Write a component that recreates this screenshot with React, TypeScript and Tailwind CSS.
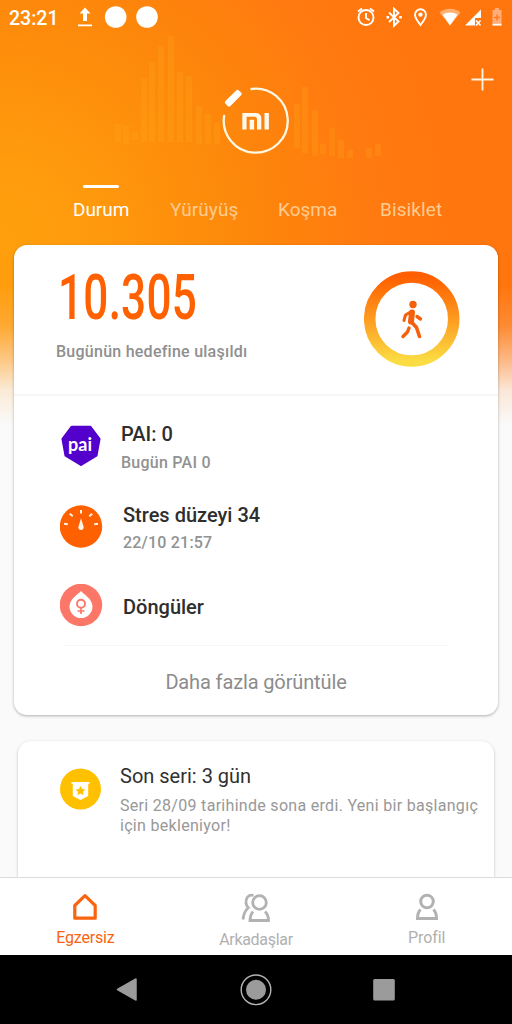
import React, { useState } from "react";

const bars = [
  [115, 124, 18], [123, 126, 18], [132, 132, 8], [141, 78, 64], [149, 62, 80],
  [158, 46, 96], [168, 36, 106], [177, 72, 70], [186, 76, 66], [196, 106, 38],
  [205, 114, 30], [214, 122, 22], [294, 104, 44], [302, 87, 66], [312, 110, 46], [320, 144, 10],
  [329, 128, 28], [338, 140, 18], [347, 150, 8], [366, 148, 10], [375, 144, 12],
];

const tabs = [
  { name: "Durum", className: "w-[97px] tracking-[-0.05px]" },
  { name: "Yürüyüş", className: "w-[108px] tracking-[0.1px]" },
  { name: "Koşma", className: "w-[102px] tracking-[0px]" },
  { name: "Bisiklet", className: "w-[80px] tracking-[0.1px]" },
];

function StatusBar() {
  return (
    <div className="flex h-[34px] items-center pl-[9px] text-white">
      <span className="w-[68px] text-[19.5px] font-medium leading-[34px] mt-[3px]">23:21</span>
      <svg width="84" height="34" viewBox="77 0 84 34" fill="#fff">
        <path d="M85 7.5l5.500 6H87V21h-4v-7.500h-3.500z M78 24.500h14v1.700H78z" />
        <circle cx="115.700" cy="17" r="10.800" />
        <circle cx="147" cy="17" r="10.800" />
      </svg>
      <svg className="ml-auto" width="160" height="34" viewBox="352 0 160 34" fill="none" stroke="#fff" strokeWidth="1.900">
        <circle cx="366" cy="17.500" r="7.500" />
        <path d="M366 13v5l3.500 2.200M358 11.500l4-3M374 11.500l-4-3" />
        <path d="M389 12.500l9.500 9-4.500 4.300V8.700l4.500 4.300-9.500 9" />
        <path d="M386.500 17.200h2.600M399.200 17.200h2.600" strokeWidth="2.400" />
        <path d="M420.500 25c-3.500-4.500-5.500-7.500-5.500-10.300a5.500 5.500 0 0 1 11 0c0 2.800-2 5.800-5.500 10.300z" />
        <circle cx="420.500" cy="14.600" r="2.200" fill="#fff" stroke="none" />
        <path d="M439.500 12.500c6-5 15-5 21 0L450 25.500z" fill="#ffb071" stroke="none" />
        <path d="M442.500 14.500c4.500-2.800 10.500-2.800 15 0L450 25.500z" fill="#fff" stroke="none" />
        <path d="M465 25.500L481 9.500V18h-6v7.500z" fill="#fff" stroke="none" />
        <path d="M476 20.500l4.500 5M480.500 20.500l-4.500 5" strokeWidth="1.600" />
        <path d="M495 8h4v2h2.500v15h-9V10h2.500z" fill="#ffae7a" stroke="none" />
        <path d="M494 17.500h6M497 14.500v6" stroke="#ff7a1c" strokeWidth="1.500" />
        <path d="M492.500 24.700h9" strokeWidth="1.800" />
      </svg>
    </div>
  );
}

function Header() {
  const [active, setActive] = useState("Durum");

  return (
    <div className="h-[211px]">
      <div className="flex h-[151px]">
        <div className="w-[170px]" />
        <svg width="172" height="151" viewBox="170 34 172 151" fill="none">
          <path d="M251.500 89a32 32 0 1 1-27.400 27" stroke="#fff8e4" strokeWidth="2.300" strokeLinecap="round" />
          <rect x="223.800" y="94.700" width="19" height="7" rx="2" fill="#fff" transform="rotate(-45 233.300 98.200)" />
          <g fill="#fff8ec">
            <rect x="242.300" y="113" width="4.300" height="16.500" rx="0.500" />
            <path d="M243 113h12.500q5.800 0 5.800 5.500v11h-4.300V119q0-2.200-2.500-2.200H243z" />
            <rect x="249.600" y="119.800" width="4.500" height="9.700" rx="0.500" />
            <rect x="264.500" y="113" width="4.400" height="16.500" rx="0.500" />
          </g>
        </svg>
        <button className="ml-[129px] mt-[34px] h-[23px] w-[23px]" aria-label="Ekle">
          <svg width="23" height="23" viewBox="0 0 23 23" stroke="#fff3e0" strokeWidth="1.900">
            <path d="M11.500 0.500v22M0.500 11.500h22" />
          </svg>
        </button>
      </div>
      <div className="flex pl-[73px]">
        {tabs.map((tab) => (
          <button
            key={tab.name}
            onClick={() => setActive(tab.name)}
            className={`${tab.className} text-left text-[19px] leading-[44px] ${
              active === tab.name ? "text-white" : "text-[#ffcb90]"
            }`}
          >
            <div className={`ml-[10px] h-[3px] w-9 rounded-sm ${active === tab.name ? "bg-white" : ""}`} />
            <span>{tab.name}</span>
          </button>
        ))}
      </div>
    </div>
  );
}

function PaiIcon() {
  return (
    <svg className="mt-[5px]" width="43" height="43" viewBox="59 425 43 43">
      <path
        d="M70.700 427h18.600l9 12-3 16.500L80 464.800l-15.300-9.300-3-16.500z"
        fill="#5400cc"
        stroke="#5400cc"
        strokeWidth="2.500"
        strokeLinejoin="round"
      />
      <text x="79" y="450.500" textAnchor="middle" fontFamily="Lato, sans-serif" fontWeight="700" fontSize="18" textLength="24" fill="#fff">
        pai
      </text>
    </svg>
  );
}

function StressIcon() {
  return (
    <svg className="mt-[5px]" width="43" height="43" viewBox="0.500 0 43 43">
      <circle cx="21.500" cy="21.500" r="21.200" fill="#ff6000" />
      <path d="M21.500 5v3.500M10.300 8.700l2.900 2.600M32.700 8.700l-2.900 2.600M4.500 18.800l3.800.5M38.500 18.800l-3.800.5" stroke="#fff3e6" strokeWidth="2" />
      <path d="M21.500 13.500l2.700 8.500q0 3-2.700 3t-2.700-3z" fill="#fff3e6" />
    </svg>
  );
}

function CycleIcon() {
  return (
    <svg className="mt-[6px]" width="43" height="43" viewBox="0.500 0.500 43 43" fill="none">
      <circle cx="21.500" cy="21.500" r="21.200" fill="#fc7767" />
      <path d="M21.500 7.500c2 3 11.500 7.500 11.500 15.500a11.500 11.500 0 0 1-23 0c0-8 9.500-12.500 11.500-15.500z" fill="#fff" />
      <path d="M21.500 24.500v6M18 27.500h7" stroke="#fc7767" strokeWidth="1.700" />
      <circle cx="21.500" cy="20.300" r="4" stroke="#fc7767" strokeWidth="1.900" />
    </svg>
  );
}

function SummaryCard() {
  return (
    <div className="mx-[14px] h-[470px] rounded-[13px] bg-white shadow-[0_1px_3px_rgba(0,0,0,0.3)]">
      <div className="flex h-[151px] justify-between border-b-2 border-[#f6f6f6] pl-[42px] pr-[38px]">
        <div>
          <div className="mt-[17px] h-[72px] w-[150px] origin-left scale-x-[0.7] whitespace-nowrap pl-[3px] text-[63px] font-medium leading-[72px] tracking-[0.3px] text-[#ff6000]">
            10.305
          </div>
          <div className="mt-[6px] text-[16px] font-medium leading-[24px] tracking-[0.25px] text-[#8f8f8f]">
            Bugünün hedefine ulaşıldı
          </div>
        </div>
        <svg className="mt-[26px]" width="96" height="96" viewBox="0 0 96 96" fill="none">
          <defs>
            <linearGradient id="ring" x1="0" y1="0" x2="0" y2="1">
              <stop offset="0" stopColor="#ff5f00" />
              <stop offset="0.500" stopColor="#fd9b20" />
              <stop offset="1" stopColor="#fbdc43" />
            </linearGradient>
          </defs>
          <circle cx="47.700" cy="48" r="42" stroke="url(#ring)" strokeWidth="11.500" />
          <circle cx="49" cy="33.500" r="3.700" fill="#f4600c" />
          <g stroke="#f4600c" strokeLinecap="round" strokeLinejoin="round">
            <path d="M46.500 41l-5 3-1.500 5.500" strokeWidth="3" />
            <path d="M48 41.500l-1 9" strokeWidth="6" />
            <path d="M48 51.500l4.500 5 3 9" strokeWidth="3.600" />
            <path d="M45 57l-1.500 4-4.500 4.500" strokeWidth="3.400" />
            <path d="M53 45.500l3.500 2.500" strokeWidth="3.400" />
          </g>
        </svg>
      </div>
      <div className="h-[249px] pl-[46px] pt-6">
        <div className="flex h-20 gap-[18px]">
          <PaiIcon />
          <div className="leading-[28px]">
            <div className="text-[20px] font-medium text-[#2e2e2e]">PAI: 0</div>
            <div className="text-[16px] font-medium leading-[30px] tracking-[0.25px] text-[#929292]">Bugün PAI 0</div>
          </div>
        </div>
        <div className="flex h-[78px] gap-5">
          <StressIcon />
          <div className="pt-px leading-[28px]">
            <div className="text-[20px] font-medium text-[#2e2e2e]">Stres düzeyi 34</div>
            <div className="text-[16px] font-medium tracking-[0.2px] text-[#929292]">22/10 21:57</div>
          </div>
        </div>
        <div className="flex gap-5">
          <CycleIcon />
          <div className="text-[20px] font-medium leading-[59px] text-[#2e2e2e]">Döngüler</div>
        </div>
      </div>
      <div className="mx-[50px] h-px bg-[#f6f6f6]" />
      <button className="block h-[68px] w-full pt-[3px] text-center text-[20px] tracking-[-0.13px] text-[#8c8c8c]">
        Daha fazla görüntüle
      </button>
    </div>
  );
}

function StreakCard() {
  return (
    <div className="mx-[18px] mt-[26px] flex h-[136px] rounded-t-[13px] bg-white pl-[42px] pt-[27px] shadow-[0_1px_3px_rgba(0,0,0,0.25)]">
      <svg width="42" height="42" viewBox="0.500 0 42 42">
        <circle cx="21" cy="21" r="20.500" fill="#ffc000" />
        <path d="M12 14h18v1.800h-1.300V28L21 32l-7.700-4V15.800H12z" fill="#fff" />
        <path d="M21 17.800l1.500 3.200 3.500.4-2.600 2.300.7 3.500-3.100-1.700-3.100 1.700.7-3.500-2.600-2.300 3.500-.4z" fill="#ffc000" />
      </svg>
      <div className="ml-[18px] -mt-[6px]">
        <div className="text-[20px] leading-[28px] text-[#303030]">Son seri: 3 gün</div>
        <div className="mt-[6px] w-[366px] text-[16px] leading-[19.500px] tracking-[0.3px] text-[#989898]">
          Seri 28/09 tarihinde sona erdi. Yeni bir başlangıç için bekleniyor!
        </div>
      </div>
    </div>
  );
}

function BottomNav() {
  return (
    <div className="relative grid h-[78px] grid-cols-3 border-t border-[#dcdcdc] bg-white text-center text-[16px] leading-5 text-[#b0b0b0]">
      <div className="flex flex-col items-center pt-[15px] text-[#fa640f]">
        <svg width="26" height="28" viewBox="0 0 26 28" fill="none" stroke="#fa640f" strokeWidth="3.200" strokeLinejoin="round">
          <path d="M2.800 12.500L13 2.700l10.200 9.800v12.700H2.800z" />
        </svg>
        <span className="mt-[7px] tracking-[-0.2px]">Egzersiz</span>
      </div>
      <div className="flex flex-col items-center pt-[15px]">
        <svg width="30" height="30" viewBox="0 0 30 30" fill="none" stroke="#b2b2b2" strokeWidth="2.800">
          <circle cx="18.500" cy="9.500" r="6.800" />
          <path d="M12.500 2.300C7 1.500 4.500 5.500 5 10c.2 2 1 3.500 2.300 4.700C4 17.500 2.500 21 2 26.500" />
          <path d="M12 18.500C10 21 9 24 9 27.500h18.500c0-3.500-1-6.500-3.500-9" />
        </svg>
        <span className="mt-[7px] tracking-[-0.3px]">Arkadaşlar</span>
      </div>
      <div className="flex flex-col items-center pt-[15px]">
        <svg width="24" height="28" viewBox="0 0 24 28" fill="none" stroke="#b2b2b2" strokeWidth="3">
          <circle cx="12" cy="8.500" r="6.300" />
          <path d="M5.500 16.500C3.500 18.500 2.500 21.500 2.500 25.500h19c0-4-1-7-3-9" />
        </svg>
        <span className="mt-[7px] tracking-[-0.1px]">Profil</span>
      </div>
    </div>
  );
}

function App() {
  return (
    <div
      className="relative h-[1024px] w-[512px] overflow-hidden bg-[linear-gradient(180deg,rgba(250,250,250,0)_285px,rgba(250,250,250,0.15)_325px,rgba(250,250,250,0.5)_360px,rgba(250,250,250,0.85)_390px,#fafafa_425px),radial-gradient(circle_at_0px_240px,#ff9f0d_0px,#ff9c0d_70px,#fd870b_250px,#ff7a10_370px,#ff760e_460px)] bg-[#fafafa]"
      style={{ fontFamily: "Roboto, sans-serif" }}
    >
      <svg className="absolute left-0 top-0" width="512" height="180" fill="#ffb21c" opacity="0.2">
        {bars.map(([x, y, h]) => (
          <rect key={x} x={x} y={y} width="6" height={h} />
        ))}
      </svg>
      <div className="relative">
        <StatusBar />
        <Header />
        <SummaryCard />
        <StreakCard />
        <BottomNav />
        <div className="relative h-[69px] bg-black">
          <svg width="512" height="69" viewBox="0 955 512 69" fill="#9b9b9b">
            <path d="M117.500 989.500l18.500-10.500v21z" stroke="#9b9b9b" strokeWidth="1.500" strokeLinejoin="round" />
            <circle cx="256" cy="989.800" r="10" />
            <circle cx="256" cy="989.800" r="14.800" fill="none" stroke="#b5b5b5" strokeWidth="1.400" />
            <rect x="373.200" y="979" width="21.600" height="21.600" rx="1.500" />
          </svg>
        </div>
      </div>
    </div>
  );
}

export default App;
